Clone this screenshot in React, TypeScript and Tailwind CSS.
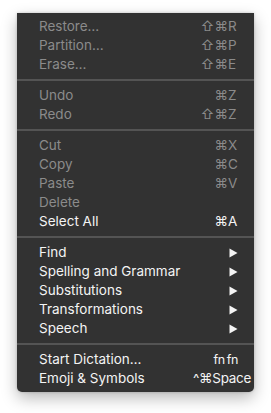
type Item = {
  label: string;
  mods?: string;
  keyChar?: string;
  plain?: string;
  submenu?: boolean;
  disabled?: boolean;
};

const GROUPS: Item[][] = [
  [
    { label: "Restore…", mods: "⇧⌘", keyChar: "R", disabled: true },
    { label: "Partition…", mods: "⇧⌘", keyChar: "P", disabled: true },
    { label: "Erase…", mods: "⇧⌘", keyChar: "E", disabled: true },
  ],
  [
    { label: "Undo", mods: "⌘", keyChar: "Z", disabled: true },
    { label: "Redo", mods: "⇧⌘", keyChar: "Z", disabled: true },
  ],
  [
    { label: "Cut", mods: "⌘", keyChar: "X", disabled: true },
    { label: "Copy", mods: "⌘", keyChar: "C", disabled: true },
    { label: "Paste", mods: "⌘", keyChar: "V", disabled: true },
    { label: "Delete", disabled: true },
    { label: "Select All", mods: "⌘", keyChar: "A" },
  ],
  [
    { label: "Find", submenu: true },
    { label: "Spelling and Grammar", submenu: true },
    { label: "Substitutions", submenu: true },
    { label: "Transformations", submenu: true },
    { label: "Speech", submenu: true },
  ],
  [
    { label: "Start Dictation…", plain: "fn fn" },
    { label: "Emoji & Symbols", plain: "^⌘Space" },
  ],
];

function Arrow() {
  return (
    <svg width="9" height="10" viewBox="0 0 9 10" className="block">
      <path d="M0.5 0.5 L8.5 5 L0.5 9.5 Z" fill="#f4f4f4" />
    </svg>
  );
}

function Row({ item }: { item: Item }) {
  const color = item.disabled ? "text-[#8b8b8b]" : "text-[#f4f4f4]";
  // "^⌘Space" runs past the key column, nearly to the menu edge
  const overflow = item.plain === "^⌘Space";
  return (
    <div className={`flex h-[19px] items-center pl-[22px] pr-[16px] ${color}`}>
      <span className="flex-1 whitespace-nowrap">{item.label}</span>
      {item.submenu && (
        <span className="w-[10px] flex justify-end">
          <Arrow />
        </span>
      )}
      {item.plain && (
        <span
          className={`whitespace-nowrap ${overflow ? "-mr-[13px] tracking-[-0.3px]" : "text-[12.5px] tracking-[-0.4px] [word-spacing:-1px]"}`}
        >
          {item.plain}
        </span>
      )}
      {item.keyChar && (
        <span className="flex items-center">
          <span className="whitespace-nowrap text-right">{item.mods}</span>
          <span className="w-[10px] whitespace-nowrap text-left">{item.keyChar}</span>
        </span>
      )}
    </div>
  );
}

export default function App() {
  return (
    <div className="w-[271px] h-[413px] bg-white pt-[13px] pl-[17px]">
      <div
        className="w-[237px] bg-[#323232] rounded-b-[5px] pt-[4px] pb-[4px] text-[13.5px] leading-[19px] shadow-[0_6px_16px_rgba(0,0,0,0.28),0_0_3px_rgba(0,0,0,0.2)]"
        style={{ fontFamily: 'Inter, "DejaVu Sans", sans-serif' }}
      >
        {GROUPS.map((group, gi) => (
          <div key={gi}>
            {gi > 0 && <div className="my-[5px] h-[2px] bg-[#545454]" />}
            {group.map((item) => (
              <Row key={item.label} item={item} />
            ))}
          </div>
        ))}
      </div>
    </div>
  );
}
